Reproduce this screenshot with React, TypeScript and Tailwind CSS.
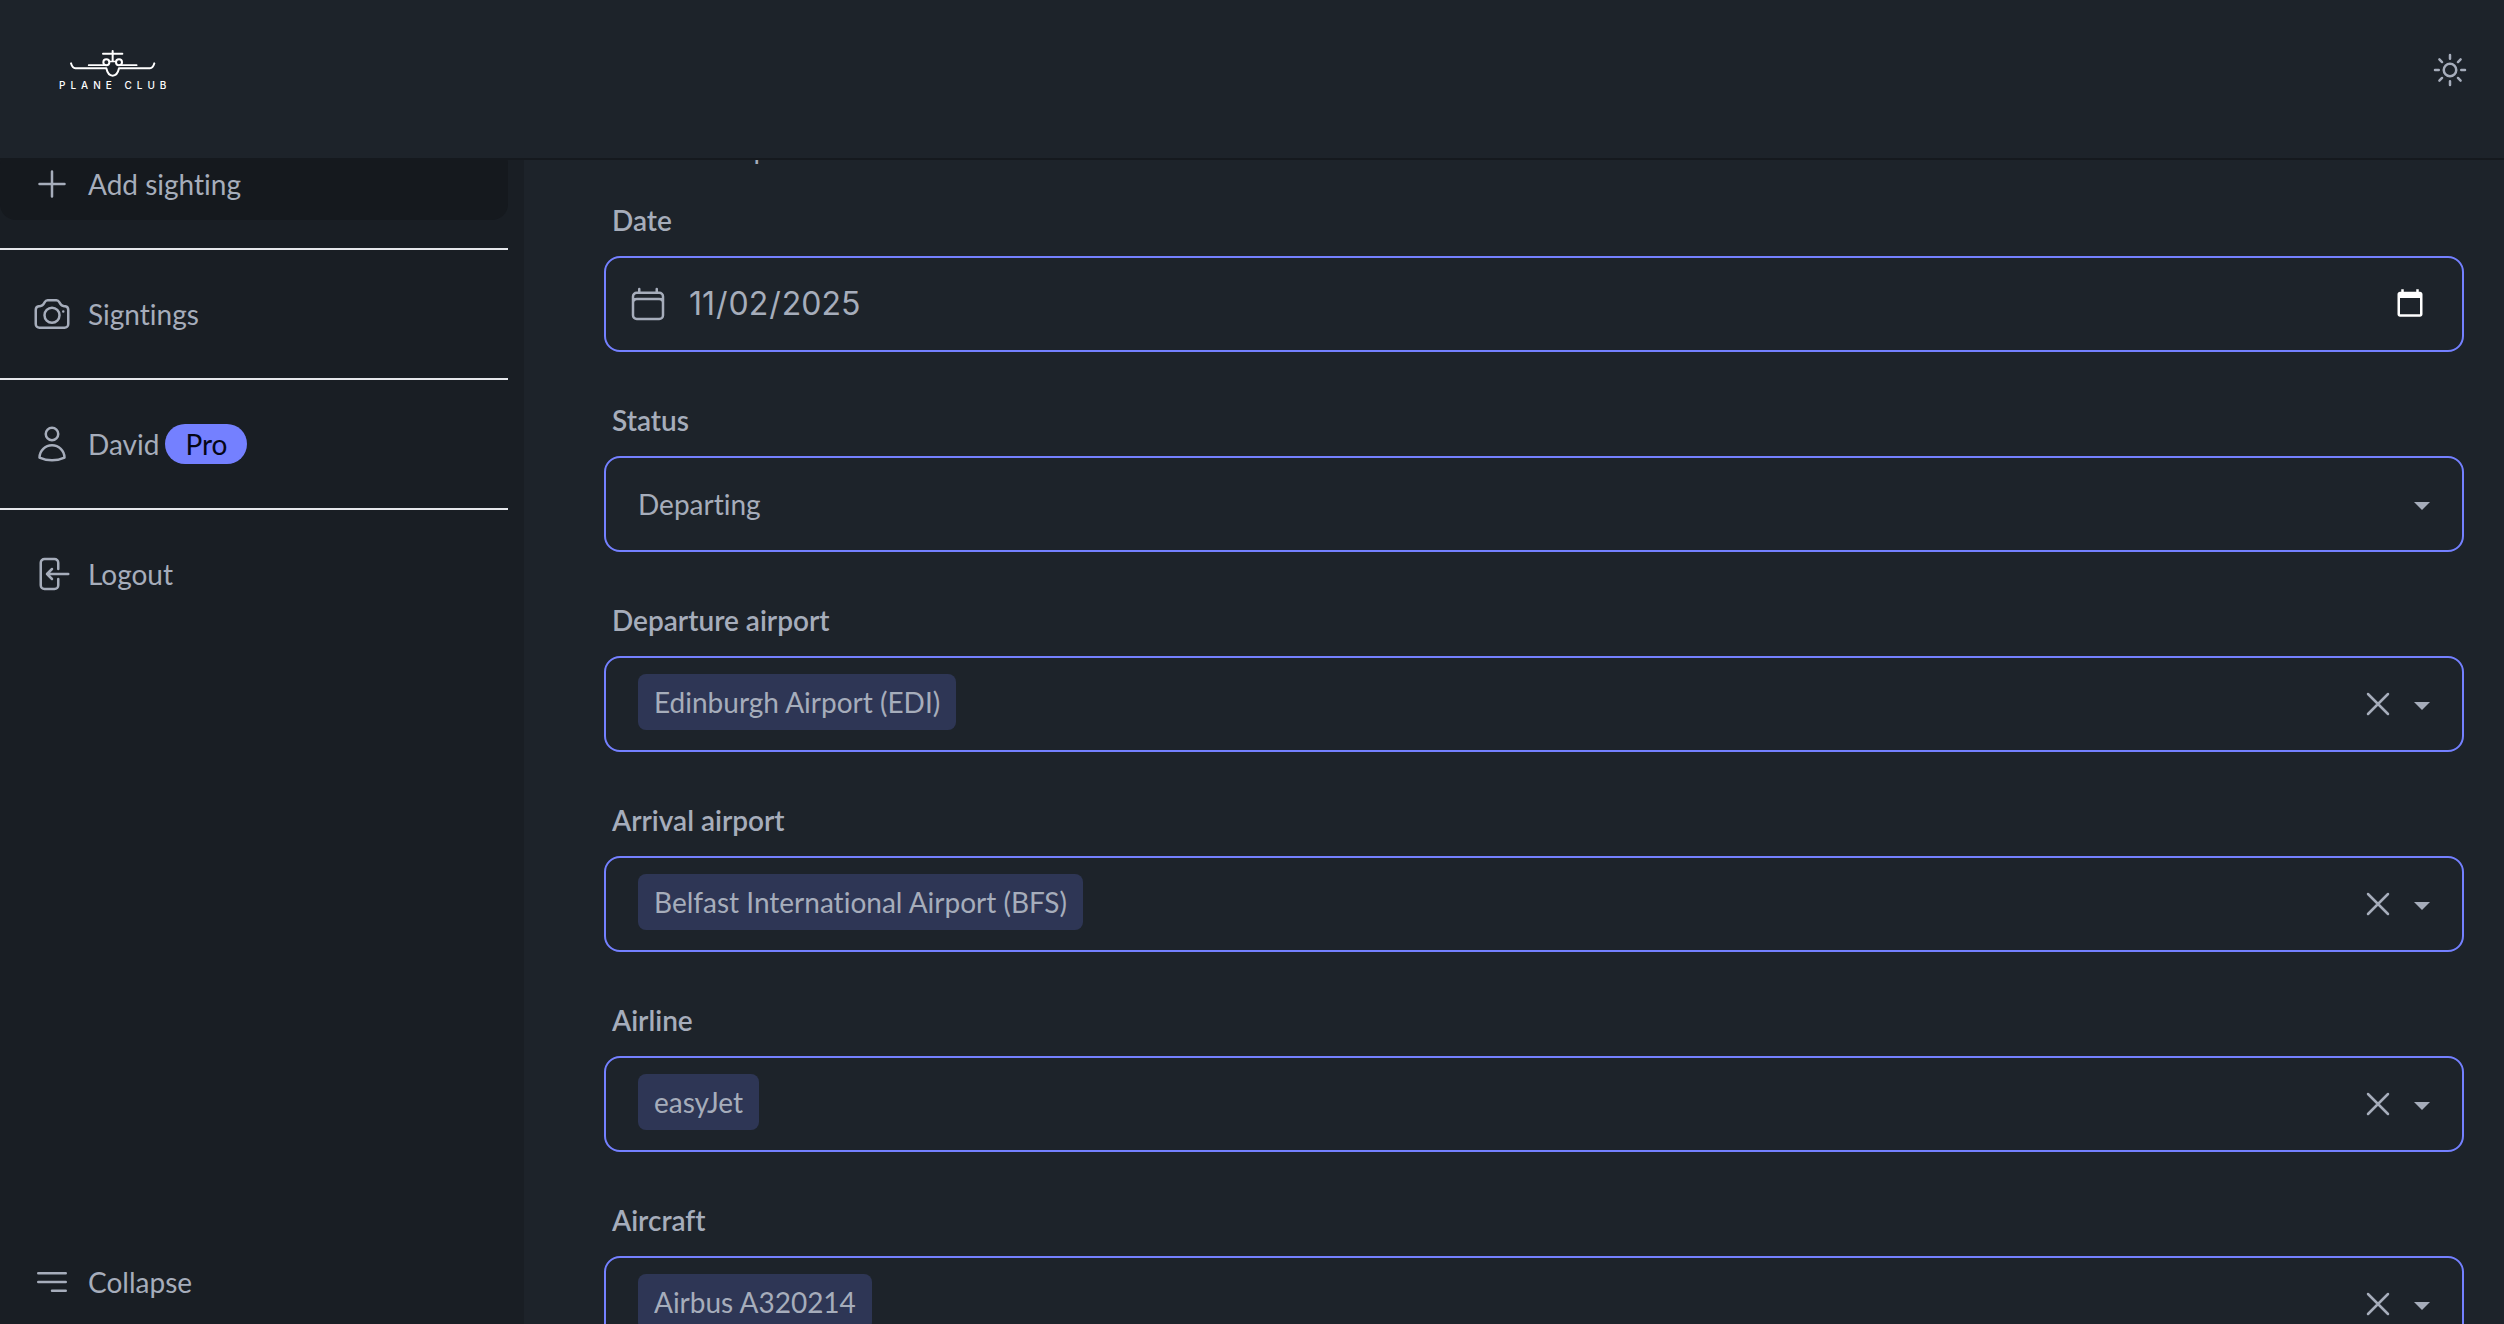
import { useState } from "react";
import type { ReactNode } from "react";
import type { IconType } from "react-icons";
import {
  HiOutlineArrowLeftOnRectangle,
  HiOutlineBars3BottomRight,
  HiOutlineCalendar,
  HiOutlineCamera,
  HiOutlinePlus,
  HiOutlineSun,
  HiOutlineUser,
  HiOutlineXMark,
} from "react-icons/hi2";

const TAG_FIELDS: { id: string; label: string; value: string }[] = [
  { id: "departure", label: "Departure airport", value: "Edinburgh Airport (EDI)" },
  { id: "arrival", label: "Arrival airport", value: "Belfast International Airport (BFS)" },
  { id: "airline", label: "Airline", value: "easyJet" },
  { id: "aircraft", label: "Aircraft", value: "Airbus A320214" },
];

function Logo() {
  return (
    <a href="#home" className="flex flex-col items-center gap-[3px] text-white" aria-label="Plane Club">
      <svg
        viewBox="88 60 264 81"
        className="w-[88px] h-[27px]"
        fill="none"
        stroke="currentColor"
        strokeWidth="6"
        strokeLinecap="round"
        strokeLinejoin="round"
      >
        <path d="M219 63v29M190 71.500h58" />
        <circle cx="200" cy="97" r="9" />
        <circle cx="238" cy="97" r="9" />
        <path d="M211 94.500h16M147 105.500h51M240 105.500h51" strokeWidth="5" />
        <path d="M94 100c3 10 6 15 13 15h93c3 14 10 22 19 22s16-8 19-22h93c7 0 10-5 13-15" />
      </svg>
      <span className="-mr-[5px] font-['Inter'] text-[10px] leading-[10px] font-medium tracking-[5px]">
        PLANE CLUB
      </span>
    </a>
  );
}

function Caret({ className = "" }: { className?: string }) {
  return (
    <svg viewBox="0 0 16 8" className={`w-4 h-2 ${className}`} fill="currentColor" aria-hidden="true">
      <path d="M0 0h16L8 8z" />
    </svg>
  );
}

function NavItem({
  icon: Icon,
  active = false,
  children,
}: {
  icon: IconType;
  active?: boolean;
  children: ReactNode;
}) {
  return (
    <a
      href="#nav"
      className={`flex items-center gap-4 h-18 px-8 rounded-2xl ${active ? "bg-[#15191e]" : ""}`}
    >
      <Icon className="size-10" />
      <span className="flex items-center gap-1.5">{children}</span>
    </a>
  );
}

function Field({ id, label, children }: { id: string; label: string; children: ReactNode }) {
  return (
    <div className="mb-8">
      <label htmlFor={id} className="block px-2 py-4 font-semibold">
        {label}
      </label>
      <div className="relative flex items-center h-24 border-2 border-[#7480ff] rounded-2xl">
        {children}
      </div>
    </div>
  );
}

function TagField({ id, label, value }: { id: string; label: string; value: string }) {
  const [selected, setSelected] = useState(value);
  return (
    <Field id={id} label={label}>
      <div className="flex flex-1 items-center pl-8">
        <select
          id={id}
          value={selected}
          onChange={(e) => setSelected(e.target.value)}
          className="appearance-none field-sizing-content h-14 px-4 mb-1 rounded-lg bg-[#2e3655]"
        >
          <option value="">Select</option>
          <option value={value}>{value}</option>
        </select>
      </div>
      <button type="button" aria-label={`Clear ${label}`} onClick={() => setSelected("")}>
        <HiOutlineXMark className="size-10" />
      </button>
      <Caret className="ml-4 mr-8 mt-1" />
    </Field>
  );
}

export default function App() {
  return (
    <div className="flex flex-col h-screen overflow-hidden bg-[#1d232a] text-[#a6adbb] font-['Lato',sans-serif] text-[28px] leading-10 [font-variant-ligatures:none]">
      <header className="flex items-center justify-between shrink-0 h-40 pl-[59px] pr-[34px] pb-[18px] border-b-2 border-[#15191e]">
        <Logo />
        <button type="button" aria-label="Toggle theme">
          <HiOutlineSun className="size-10" />
        </button>
      </header>

      <div className="flex flex-1 min-h-0">
        <aside className="flex flex-col justify-between shrink-0 w-[524px] pr-4 pb-1.5 overflow-hidden bg-[#191e24]">
          <nav className="-mt-3">
            <NavItem icon={HiOutlinePlus} active>
              Add sighting
            </NavItem>
            <hr className="my-7 border-t-2 border-gray-200" />
            <NavItem icon={HiOutlineCamera}>Signtings</NavItem>
            <hr className="my-7 border-t-2 border-gray-200" />
            <NavItem icon={HiOutlineUser}>
              David
              <span className="h-10 px-5 rounded-full bg-[#7480ff] text-[#050617]">Pro</span>
            </NavItem>
            <hr className="my-7 border-t-2 border-gray-200" />
            <NavItem icon={HiOutlineArrowLeftOnRectangle}>Logout</NavItem>
          </nav>
          <button type="button" className="flex items-center gap-4 h-18 px-8">
            <HiOutlineBars3BottomRight className="size-10" />
            Collapse
          </button>
        </aside>

        <main className="flex-1 pl-20 pr-10 overflow-hidden">
          <p className="-mt-8 mb-4 px-1">Details of a plane to record</p>
          <form>
            <Field id="date" label="Date">
              <HiOutlineCalendar className="size-10 ml-[22px]" />
              <input
                id="date"
                type="date"
                defaultValue="2025-11-02"
                className="flex-1 h-full ml-5 mr-[34px] font-['Inter'] text-[32px] scheme-dark outline-none"
              />
            </Field>

            <Field id="status" label="Status">
              <select
                id="status"
                defaultValue="Departing"
                className="appearance-none w-full h-full px-8 bg-transparent outline-none"
              >
                <option>Departing</option>
                <option>Arriving</option>
              </select>
              <Caret className="absolute right-8 mt-1 pointer-events-none" />
            </Field>

            {TAG_FIELDS.map((f) => (
              <TagField key={f.id} {...f} />
            ))}
          </form>
        </main>
      </div>
    </div>
  );
}
